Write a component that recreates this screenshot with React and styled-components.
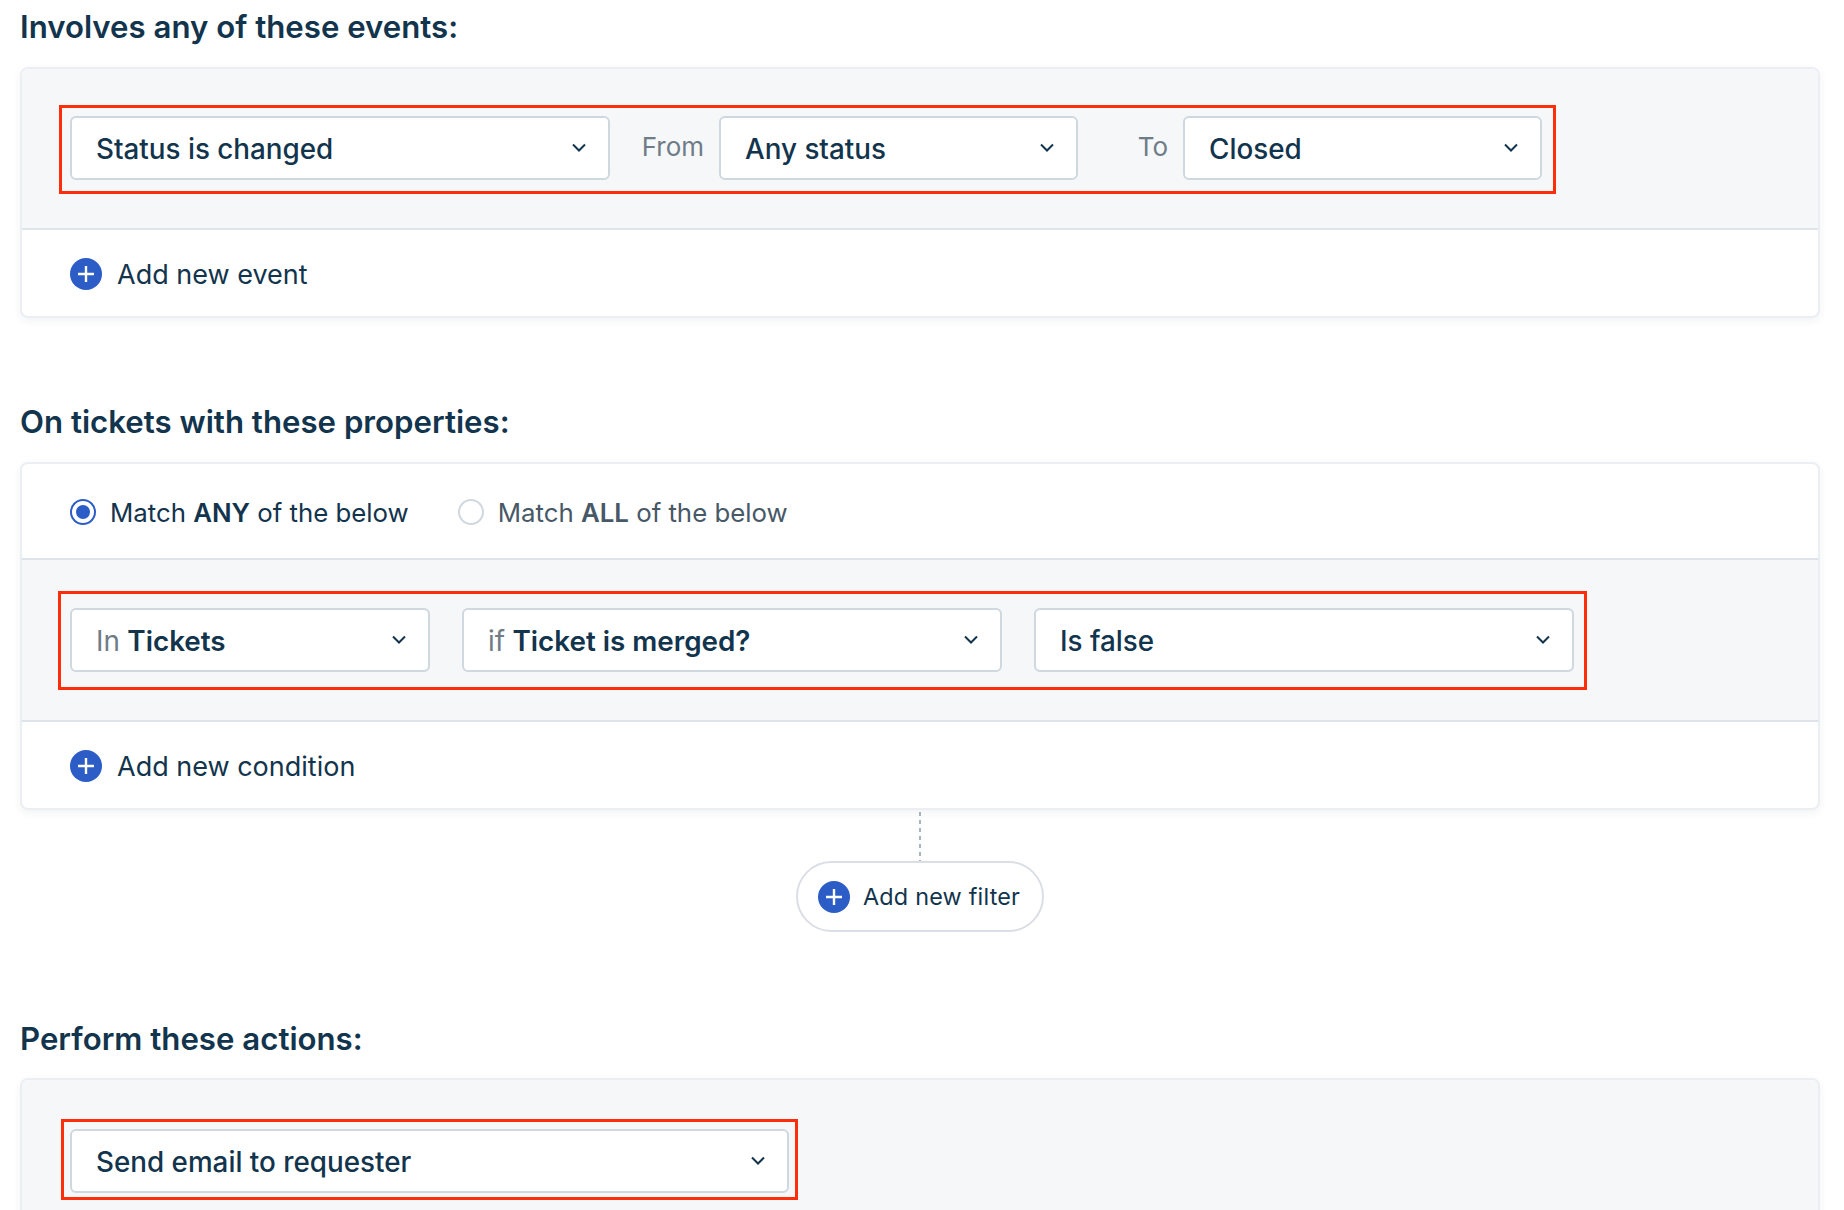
import React from "react"
import styled, { createGlobalStyle } from "styled-components"

const GlobalStyle = createGlobalStyle`
  html, body {
    margin: 0;
    padding: 0;
    background: #fff;
  }
  body {
    font-family: Inter, "Noto Sans", sans-serif;
    color: #12344d;
    height: 1210px;
    overflow: hidden;
  }
`

const Page = styled.div`
  padding: 7px 24px 0 20px;
`

const Heading = styled.h2`
  margin: ${({ $top }) => $top || 0}px 0 ${({ $bottom }) => $bottom || 20}px;
  font-size: 31.2px;
  line-height: 40px;
  font-weight: 600;
  color: #12344d;
`

const Card = styled.section`
  border: 2px solid #ebeff3;
  border-radius: 8px;
  background: #fff;
  box-shadow: 0 3px 8px rgba(24, 50, 71, 0.06);
  overflow: hidden;
`

const GreyZone = styled.div`
  background: #f5f7f9;
  padding: ${({ $top }) => $top}px 0 ${({ $bottom }) => $bottom}px ${({ $left }) => $left}px;
`

const Highlight = styled.div`
  display: inline-flex;
  align-items: flex-start;
  box-sizing: border-box;
  height: ${({ $height }) => $height}px;
  padding: ${({ $pad }) => $pad}px ${({ $right }) => $right}px 0 ${({ $left }) => $left}px;
  gap: ${({ $gap }) => $gap || 0}px;
  border: 3px solid #ff2e0a;
  vertical-align: top;
`

const Select = styled.div`
  display: flex;
  align-items: center;
  justify-content: space-between;
  box-sizing: border-box;
  flex: none;
  width: ${({ $width }) => $width}px;
  height: 64px;
  padding: 0 21px 0 24px;
  border: 2px solid #cfd7df;
  border-radius: 6px;
  background: #fff;
  font-size: 27.8px;
  font-weight: 500;
  color: #12344d;
  b {
    font-weight: 600;
  }
`

const SelectText = styled.span`
  padding-top: 2px;
`

const Muted = styled.span`
  color: #6f7c87;
  font-weight: 400;
`

const FieldLabel = styled.span`
  flex: none;
  width: ${({ $width }) => $width}px;
  line-height: 62px;
  text-align: right;
  padding-right: 15px;
  box-sizing: border-box;
  font-size: 26px;
  color: #6f7c87;
`

const AddRow = styled.div`
  display: flex;
  align-items: center;
  gap: 15px;
  box-sizing: border-box;
  height: 88px;
  padding: 2px 0 0 48px;
  border-top: 2px solid #dfe4ea;
  font-size: 27px;
  color: #12344d;
`

const RadioRow = styled.div`
  display: flex;
  align-items: center;
  box-sizing: border-box;
  height: 96px;
  padding: 2px 0 0 48px;
  font-size: 25.8px;
  border-bottom: 2px solid #dfe4ea;
`

const RadioOption = styled.label`
  display: flex;
  align-items: center;
  gap: 14px;
  margin-right: ${({ $gap }) => $gap || 0}px;
  color: ${({ $active }) => ($active ? "#12344d" : "#475867")};
  b {
    font-weight: 600;
  }
`

const RadioMark = styled.span`
  box-sizing: border-box;
  width: 26px;
  height: 26px;
  border-radius: 50%;
  border: 2px solid ${({ $active }) => ($active ? "#2c5cc5" : "#cfd7df")};
  background: #fff;
  display: flex;
  align-items: center;
  justify-content: center;
  &::after {
    content: "";
    width: 14px;
    height: 14px;
    border-radius: 50%;
    background: ${({ $active }) => ($active ? "#2c5cc5" : "transparent")};
  }
`

const FilterWrap = styled.div`
  display: flex;
  flex-direction: column;
  align-items: center;
`

const Connector = styled.div`
  width: 2px;
  height: 49px;
  margin-top: 2px;
  background: repeating-linear-gradient(to bottom, #a9b2bb 0 4px, transparent 4px 8px);
`

const FilterButton = styled.button`
  display: flex;
  align-items: center;
  gap: 13px;
  box-sizing: border-box;
  width: 248px;
  height: 71px;
  padding: 0 0 0 20px;
  border: 2px solid #dadfe5;
  border-radius: 36px;
  background: #fff;
  font-family: inherit;
  font-size: 23.4px;
  letter-spacing: 0.2px;
  color: #12344d;
`

const Chevron = () => (
  <svg width="16" height="10" viewBox="0 0 16 10" fill="none">
    <path d="M2 1.5 8 7.5 14 1.5" stroke="#12344d" strokeWidth="2" />
  </svg>
)

const PlusIcon = () => (
  <svg width="32" height="32" viewBox="0 0 32 32">
    <circle cx="16" cy="16" r="16" fill="#2c5cc5" />
    <path d="M16 8v16M8 16h16" stroke="#fff" strokeWidth="2.4" />
  </svg>
)

const Dropdown = ({ width, children }) => (
  <Select $width={width}>
    <SelectText>{children}</SelectText>
    <Chevron />
  </Select>
)

const App = () => (
  <Page>
    <GlobalStyle />
    <Heading>Involves any of these events:</Heading>
    <Card>
      <GreyZone $top={36} $bottom={34} $left={37}>
        <Highlight $height={89} $pad={8} $left={8} $right={11}>
          <Dropdown width={540}>Status is changed</Dropdown>
          <FieldLabel $width={109}>From</FieldLabel>
          <Dropdown width={359}>Any status</Dropdown>
          <FieldLabel $width={105}>To</FieldLabel>
          <Dropdown width={359}>Closed</Dropdown>
        </Highlight>
      </GreyZone>
      <AddRow>
        <PlusIcon />
        Add new event
      </AddRow>
    </Card>

    <Heading $top={84}>On tickets with these properties:</Heading>
    <Card>
      <RadioRow>
        <RadioOption $active $gap={49}>
          <RadioMark $active />
          <span>
            Match <b>ANY</b> of the below
          </span>
        </RadioOption>
        <RadioOption>
          <RadioMark />
          <span>
            Match <b>ALL</b> of the below
          </span>
        </RadioOption>
      </RadioRow>
      <GreyZone $top={31} $bottom={30} $left={36}>
        <Highlight $height={99} $pad={14} $left={9} $right={10} $gap={32}>
          <Dropdown width={360}>
            <Muted>In</Muted> <b>Tickets</b>
          </Dropdown>
          <Dropdown width={540}>
            <Muted>if</Muted> <b>Ticket is merged?</b>
          </Dropdown>
          <Dropdown width={540}>Is false</Dropdown>
        </Highlight>
      </GreyZone>
      <AddRow>
        <PlusIcon />
        Add new condition
      </AddRow>
    </Card>
    <FilterWrap>
      <Connector />
      <FilterButton>
        <PlusIcon />
        Add new filter
      </FilterButton>
    </FilterWrap>

    <Heading $top={87} $bottom={19}>Perform these actions:</Heading>
    <Card>
      <GreyZone $top={39} $bottom={40} $left={39}>
        <Highlight $height={81} $pad={7} $left={6} $right={6}>
          <Dropdown width={719}>Send email to requester</Dropdown>
        </Highlight>
      </GreyZone>
    </Card>
  </Page>
)

export default App
